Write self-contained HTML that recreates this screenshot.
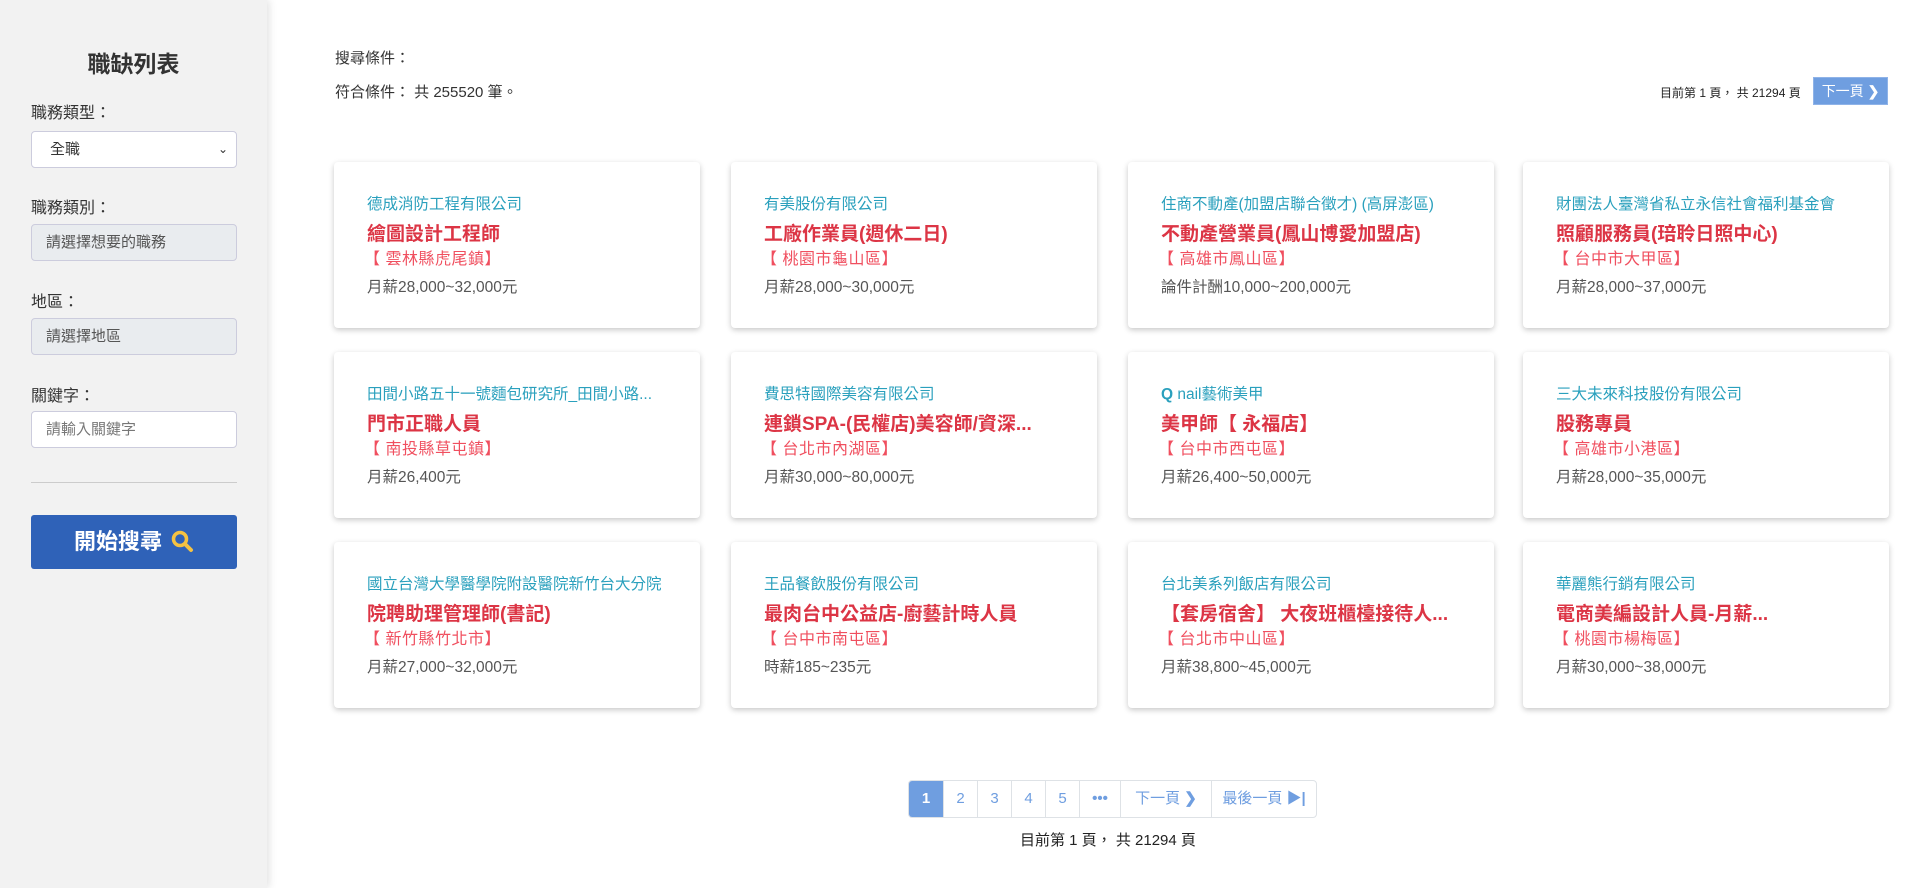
<!DOCTYPE html>
<html><head><meta charset="utf-8"><style>
*{box-sizing:border-box;margin:0;padding:0}
body{width:1920px;height:888px;overflow:hidden;background:#fff;font-family:"Liberation Sans","Noto Sans CJK TC",sans-serif;color:#333;position:relative}
.side{position:absolute;left:0;top:0;width:267px;height:888px;background:#f2f2f2;box-shadow:2px 0 8px rgba(0,0,0,.12)}
.side h1{position:absolute;left:0;width:267px;top:45px;text-align:center;font-size:23px;font-weight:bold;color:#333}
.lbl{position:absolute;left:31px;font-size:16px;color:#333}
.box{position:absolute;left:31px;width:206px;height:37px;border:1px solid #ccd;border-radius:4px;font-size:15px;padding-left:14px;line-height:35px;color:#555}
.dis{background:#e9ecef;color:#555}
.hr{position:absolute;left:31px;width:206px;top:482px;border-top:1px solid #ccc}
.btn{position:absolute;left:31px;top:515px;width:206px;height:54px;background:#2f62b8;border-radius:3px;color:#fff;font-size:22px;font-weight:bold;text-align:center;line-height:54px}
.t{position:absolute;font-size:15px;color:#333}
.card{position:absolute;width:366px;height:166px;background:#fff;border-radius:4px;box-shadow:0 2px 6px rgba(0,0,0,.22)}
.card .c{position:absolute;left:33px;top:30px;font-size:15.5px;color:#2aa0bd;white-space:nowrap}
.card .j{position:absolute;left:33px;top:57px;font-size:19px;font-weight:bold;color:#dc3545;white-space:nowrap}
.card .l{position:absolute;left:30px;top:83px;font-size:16px;color:#f04f5f;white-space:nowrap;letter-spacing:0.5px}
.card .s{position:absolute;left:33px;top:113px;font-size:15.5px;color:#555;white-space:nowrap}
.pg{position:absolute;left:908px;top:780px;height:38px;display:flex;border:1px solid #dee2e6;border-radius:4px}
.pg div{height:36px;line-height:36px;text-align:center;color:#6f9ee0;font-size:15px;border-left:1px solid #dee2e6}
.pg div:first-child{border-left:none;background:#6f9ee0;color:#fff;border-radius:3px 0 0 3px}
</style></head><body>
<div class="side">
<h1>職缺列表</h1>
<div class="lbl" style="top:99px">職務類型：</div>
<div class="box" style="top:131px;background:#fff;color:#333;padding-left:18px">全職<span style="position:absolute;right:8px;top:0;font-size:12px">&#x2304;</span></div>
<div class="lbl" style="top:194px">職務類別：</div>
<div class="box dis" style="top:224px">請選擇想要的職務</div>
<div class="lbl" style="top:288px">地區：</div>
<div class="box dis" style="top:318px">請選擇地區</div>
<div class="lbl" style="top:382px">關鍵字：</div>
<div class="box" style="top:411px;background:#fff;color:#777">請輸入關鍵字</div>
<div class="hr"></div>
<div class="btn">開始搜尋<svg width="24" height="24" viewBox="0 0 24 24" style="vertical-align:-4px;margin-left:8px"><circle cx="10" cy="10" r="6.5" fill="none" stroke="#f5c242" stroke-width="3.5"/><path d="M15 15l6 6" stroke="#f5c242" stroke-width="4" stroke-linecap="round"/></svg></div>
</div>
<div class="t" style="left:335px;top:47px">搜尋條件：</div>
<div class="t" style="left:335px;top:81px">符合條件： 共 255520 筆。</div>
<div class="t" style="left:1660px;top:84px;font-size:12px;color:#222">目前第 1 頁， 共 21294 頁</div>
<div style="position:absolute;left:1813px;top:77px;width:75px;height:28px;background:#6f9ee0;border:1px solid #8fb3e8;color:#fff;font-size:14px;line-height:26px;text-align:center">下一頁 <b>❯</b></div>

<div class="card" style="left:334px;top:162px"><div class="c">德成消防工程有限公司</div><div class="j">繪圖設計工程師</div><div class="l">【 雲林縣虎尾鎮】</div><div class="s">月薪28,000~32,000元</div></div>
<div class="card" style="left:731px;top:162px"><div class="c">有美股份有限公司</div><div class="j">工廠作業員(週休二日)</div><div class="l">【 桃園市龜山區】</div><div class="s">月薪28,000~30,000元</div></div>
<div class="card" style="left:1128px;top:162px"><div class="c">住商不動產(加盟店聯合徵才) (高屏澎區)</div><div class="j">不動產營業員(鳳山博愛加盟店)</div><div class="l">【 高雄市鳳山區】</div><div class="s">論件計酬10,000~200,000元</div></div>
<div class="card" style="left:1523px;top:162px"><div class="c">財團法人臺灣省私立永信社會福利基金會</div><div class="j">照顧服務員(琣聆日照中心)</div><div class="l">【 台中市大甲區】</div><div class="s">月薪28,000~37,000元</div></div>

<div class="card" style="left:334px;top:352px"><div class="c">田間小路五十一號麵包研究所_田間小路...</div><div class="j">門市正職人員</div><div class="l">【 南投縣草屯鎮】</div><div class="s">月薪26,400元</div></div>
<div class="card" style="left:731px;top:352px"><div class="c">費思特國際美容有限公司</div><div class="j">連鎖SPA-(民權店)美容師/資深...</div><div class="l">【 台北市內湖區】</div><div class="s">月薪30,000~80,000元</div></div>
<div class="card" style="left:1128px;top:352px"><div class="c"><b>Q</b> nail藝術美甲</div><div class="j">美甲師【 永福店】</div><div class="l">【 台中市西屯區】</div><div class="s">月薪26,400~50,000元</div></div>
<div class="card" style="left:1523px;top:352px"><div class="c">三大未來科技股份有限公司</div><div class="j">股務專員</div><div class="l">【 高雄市小港區】</div><div class="s">月薪28,000~35,000元</div></div>

<div class="card" style="left:334px;top:542px"><div class="c">國立台灣大學醫學院附設醫院新竹台大分院</div><div class="j">院聘助理管理師(書記)</div><div class="l">【 新竹縣竹北市】</div><div class="s">月薪27,000~32,000元</div></div>
<div class="card" style="left:731px;top:542px"><div class="c">王品餐飲股份有限公司</div><div class="j">最肉台中公益店-廚藝計時人員</div><div class="l">【 台中市南屯區】</div><div class="s">時薪185~235元</div></div>
<div class="card" style="left:1128px;top:542px"><div class="c">台北美系列飯店有限公司</div><div class="j">【套房宿舍】 大夜班櫃檯接待人...</div><div class="l">【 台北市中山區】</div><div class="s">月薪38,800~45,000元</div></div>
<div class="card" style="left:1523px;top:542px"><div class="c">華麗熊行銷有限公司</div><div class="j">電商美編設計人員-月薪...</div><div class="l">【 桃園市楊梅區】</div><div class="s">月薪30,000~38,000元</div></div>

<div class="pg">
<div style="width:34px;font-weight:bold">1</div><div style="width:34px">2</div><div style="width:34px">3</div><div style="width:34px">4</div><div style="width:34px">5</div><div style="width:41px;font-weight:bold">•••</div><div style="width:91px">下一頁 <b>❯</b></div><div style="width:105px">最後一頁 <b>▶|</b></div>
</div>
<div class="t" style="left:1020px;top:829px;font-size:15px;color:#222">目前第 1 頁， 共 21294 頁</div>
</body></html>
